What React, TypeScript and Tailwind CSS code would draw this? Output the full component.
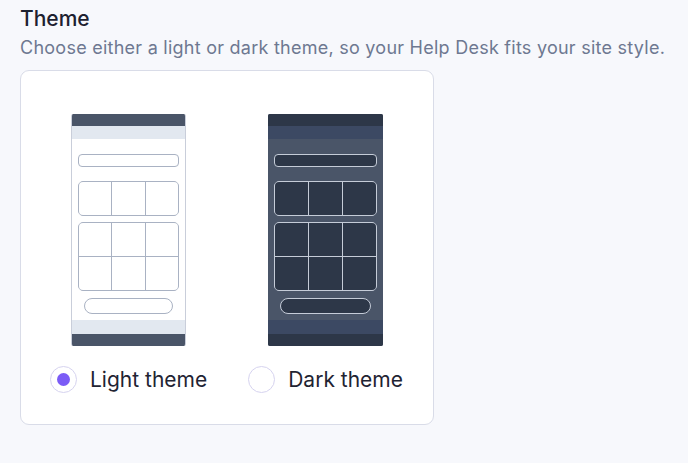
import type { ReactNode } from 'react';

type Variant = 'light' | 'dark';

const PHONE = {
  light: {
    frame: 'border-x border-[#c9ceda] bg-white',
    bar: 'bg-[#4a5568]',
    band: 'bg-[#e2e8f0]',
    border: 'border-[#a9b2c3]',
    fill: 'bg-white',
    line: 'bg-[#a9b2c3]',
  },
  dark: {
    frame: 'bg-[#4a5568]',
    bar: 'bg-[#2d3748]',
    band: 'bg-[#3c4963]',
    border: 'border-[#c5ccd8]',
    fill: 'bg-[#2d3748]',
    line: 'bg-[#c5ccd8]',
  },
};

function Grid({ rows, variant }: { rows: number; variant: Variant }) {
  const c = PHONE[variant];
  const cells = Array.from({ length: rows * 3 });
  return (
    <div className={`mx-[6px] grid grid-cols-3 gap-px overflow-hidden rounded-[5px] border ${c.border} ${c.line}`}>
      {cells.map((_, i) => (
        <div key={i} className={`h-[33px] ${c.fill}`} />
      ))}
    </div>
  );
}

function Phone({ variant }: { variant: Variant }) {
  const c = PHONE[variant];
  return (
    <div className={`flex h-[232px] w-[115px] flex-col overflow-hidden rounded-[2px] ${c.frame}`}>
      <div className={`h-[12px] ${c.bar}`} />
      <div className={`h-[13px] ${c.band}`} />
      <div className="flex flex-1 flex-col pt-[15px]">
        <div className={`mx-[6px] h-[13px] rounded-[4px] border ${c.border} ${c.fill}`} />
        <div className="mt-[14px]">
          <Grid rows={1} variant={variant} />
        </div>
        <div className="mt-[6px]">
          <Grid rows={2} variant={variant} />
        </div>
        <div className={`mx-[12px] mt-[7px] h-[16px] rounded-full border ${c.border} ${c.fill}`} />
      </div>
      <div className={`h-[14px] ${c.band}`} />
      <div className={`h-[12px] ${c.bar}`} />
    </div>
  );
}

function Radio({ checked, children }: { checked: boolean; children: ReactNode }) {
  return (
    <label className="flex cursor-pointer items-center gap-[13px]">
      <span className="flex h-[27px] w-[27px] items-center justify-center rounded-full border border-[#d6d3ef] bg-white">
        {checked && <span className="h-[13px] w-[13px] rounded-full bg-[#7b5cf6]" />}
      </span>
      <span className="text-[21px] leading-none text-[#1f2433]">{children}</span>
    </label>
  );
}

export default function App() {
  return (
    <div
      className="h-[463px] w-[688px] bg-[#f7f8fc] px-[20px] pt-[6px]"
      style={{ fontFamily: 'Inter, "Noto Sans", sans-serif' }}
    >
      <h2 className="text-[21px] font-medium leading-[26px] text-[#1d2130]">Theme</h2>
      <p className="mt-[5px] text-[18px] leading-[22px] tracking-[0.25px] text-[#6e7891]">
        Choose either a light or dark theme, so your Help Desk fits your site style.
      </p>

      <div className="mt-[11px] flex h-[355px] w-[414px] gap-[41px] rounded-[9px] border border-[#d9dce8] bg-white pl-[29px] pt-[43px]">
        <div className="flex flex-col items-center gap-[20px]">
          <Phone variant="light" />
          <Radio checked>Light theme</Radio>
        </div>
        <div className="flex flex-col items-center gap-[20px]">
          <Phone variant="dark" />
          <Radio checked={false}>Dark theme</Radio>
        </div>
      </div>
    </div>
  );
}
